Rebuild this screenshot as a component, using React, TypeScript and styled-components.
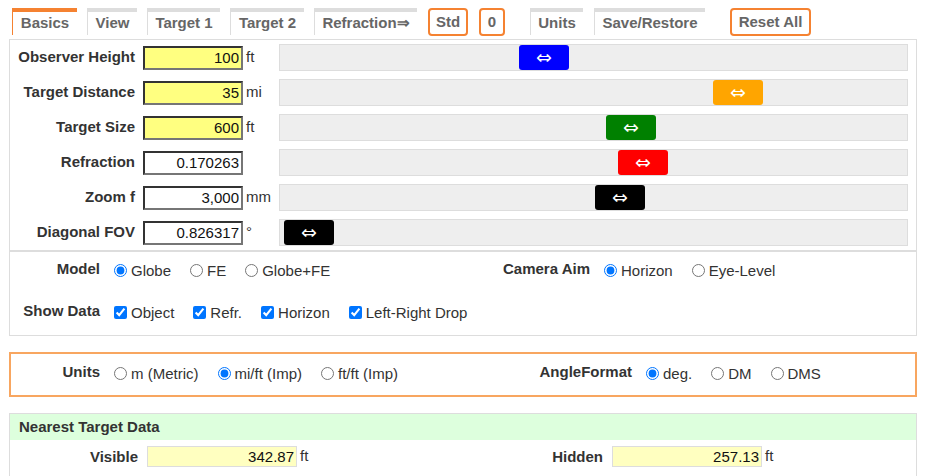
import React from 'react';
import styled, { createGlobalStyle } from 'styled-components';

const GlobalStyle = createGlobalStyle`
  body {
    margin: 0;
    background: #fff;
    font-family: 'Liberation Sans', Arial, sans-serif;
    font-size: 15px;
    color: #333;
  }
`;

interface SliderSpec {
  label: string;
  value: string;
  unit: string;
  editable: boolean;
  color: string;
  pos: number;
}

const sliders: SliderSpec[] = [
  { label: 'Observer Height', value: '100', unit: 'ft', editable: true, color: '#0000ff', pos: 239 },
  { label: 'Target Distance', value: '35', unit: 'mi', editable: true, color: '#ffa500', pos: 433 },
  { label: 'Target Size', value: '600', unit: 'ft', editable: true, color: '#008000', pos: 326 },
  { label: 'Refraction', value: '0.170263', unit: '', editable: false, color: '#ff0000', pos: 338 },
  { label: 'Zoom f', value: '3,000', unit: 'mm', editable: false, color: '#000000', pos: 315 },
  { label: 'Diagonal FOV', value: '0.826317', unit: '°', editable: false, color: '#000000', pos: 4 },
];

export default function App() {
  return (
    <Page>
      <GlobalStyle />
      <TabBar>
        <Tab $active $w={65}>Basics</Tab>
        <Tab $w={50}>View</Tab>
        <Tab $w={73}>Target 1</Tab>
        <Tab $w={74}>Target 2</Tab>
        <Tab $w={103}>Refraction⇒</Tab>
        <Button $w={40} $gap={11}>Std</Button>
        <Button $w={26} $gap={11}>0</Button>
        <Tab $w={53} $gap={25}>Units</Tab>
        <Tab $w={111} $gap={11}>Save/Restore</Tab>
        <Button $w={81} $gap={25}>Reset All</Button>
      </TabBar>

      <Panel>
        <Sliders>
          {sliders.map((s) => (
            <SliderRow key={s.label}>
              <RowLabel>{s.label}</RowLabel>
              <NumBox $editable={s.editable} readOnly value={s.value} />
              <Unit>{s.unit}</Unit>
              <Track>
                <Thumb $color={s.color} style={{ left: s.pos }}>
                  ⇔
                </Thumb>
              </Track>
            </SliderRow>
          ))}
        </Sliders>
        <Options>
          <OptRow>
            <OptGroup>
              <OptLabel $w={90}>Model</OptLabel>
              <Choice>
                <input type="radio" name="model" defaultChecked />
                Globe
              </Choice>
              <Choice>
                <input type="radio" name="model" />
                FE
              </Choice>
              <Choice>
                <input type="radio" name="model" />
                Globe+FE
              </Choice>
            </OptGroup>
            <OptGroup>
              <OptLabel $w={126}>Camera Aim</OptLabel>
              <Choice>
                <input type="radio" name="aim" defaultChecked />
                Horizon
              </Choice>
              <Choice>
                <input type="radio" name="aim" />
                Eye-Level
              </Choice>
            </OptGroup>
          </OptRow>
          <OptRow>
            <OptGroup>
              <OptLabel $w={90}>Show Data</OptLabel>
              <Choice>
                <input type="checkbox" defaultChecked />
                Object
              </Choice>
              <Choice>
                <input type="checkbox" defaultChecked />
                Refr.
              </Choice>
              <Choice>
                <input type="checkbox" defaultChecked />
                Horizon
              </Choice>
              <Choice>
                <input type="checkbox" defaultChecked />
                Left-Right Drop
              </Choice>
            </OptGroup>
          </OptRow>
        </Options>
      </Panel>

      <UnitsPanel>
        <OptRow>
          <OptGroup>
            <OptLabel $w={89}>Units</OptLabel>
            <Choice>
              <input type="radio" name="units" />
              m (Metric)
            </Choice>
            <Choice>
              <input type="radio" name="units" defaultChecked />
              mi/ft (Imp)
            </Choice>
            <Choice>
              <input type="radio" name="units" />
              ft/ft (Imp)
            </Choice>
          </OptGroup>
          <OptGroup>
            <OptLabel $w={167}>AngleFormat</OptLabel>
            <Choice>
              <input type="radio" name="angle" defaultChecked />
              deg.
            </Choice>
            <Choice>
              <input type="radio" name="angle" />
              DM
            </Choice>
            <Choice>
              <input type="radio" name="angle" />
              DMS
            </Choice>
          </OptGroup>
        </OptRow>
      </UnitsPanel>

      <DataPanel>
        <DataHeader>Nearest Target Data</DataHeader>
        <DataRow>
          <DataGroup>
            <DataLabel $w={128}>Visible</DataLabel>
            <DataBox readOnly value="342.87" />
            <Unit>ft</Unit>
          </DataGroup>
          <DataGroup>
            <DataLabel $w={139}>Hidden</DataLabel>
            <DataBox readOnly value="257.13" />
            <Unit>ft</Unit>
          </DataGroup>
        </DataRow>
      </DataPanel>
    </Page>
  );
}

const Page = styled.div`
  width: 908px;
  padding: 8px 0 0 9px;
`;

const TabBar = styled.div`
  display: flex;
  align-items: flex-start;
  padding-left: 3px;
  height: 31px;
`;

const Tab = styled.div<{ $active?: boolean; $gap?: number; $w: number }>`
  box-sizing: border-box;
  width: ${(p) => p.$w}px;
  height: 27px;
  margin-left: ${(p) => p.$gap ?? 10}px;
  border-top: 4px solid ${(p) => (p.$active ? '#f58231' : '#dddddd')};
  border-left: 1px solid ${(p) => (p.$active ? '#f58231' : '#dddddd')};
  font-weight: bold;
  color: #666;
  text-align: center;
  line-height: 22px;
  white-space: nowrap;

  &:first-child {
    margin-left: 0;
  }
`;

const Button = styled.div<{ $gap?: number; $w: number }>`
  box-sizing: border-box;
  width: ${(p) => p.$w}px;
  height: 28px;
  margin-left: ${(p) => p.$gap ?? 10}px;
  border: 2px solid #f58231;
  border-radius: 4px;
  font-weight: bold;
  color: #666;
  text-align: center;
  line-height: 24px;
  white-space: nowrap;
`;

const Panel = styled.div`
  border: 1px solid #dddddd;
`;

const Sliders = styled.div`
  display: flex;
  flex-direction: column;
  gap: 8px;
  padding: 4px 8px 4px 0;
  border-bottom: 2px solid #dddddd;
`;

const SliderRow = styled.div`
  display: grid;
  grid-template-columns: 133px 100px 36px 1fr;
  align-items: center;
  height: 27px;
`;

const RowLabel = styled.div`
  text-align: right;
  font-weight: bold;
  color: #333;
  padding-right: 8px;
  margin-top: -2px;
`;

const NumBox = styled.input<{ $editable: boolean }>`
  box-sizing: border-box;
  width: 100px;
  height: 24px;
  margin: 0;
  padding: 0 2px;
  border: 2px solid;
  border-color: #333 #767676 #767676 #333;
  background: ${(p) => (p.$editable ? '#ffff80' : '#ffffff')};
  font: 15px 'Liberation Sans', Arial, sans-serif;
  color: #111;
  text-align: right;
  outline: none;
`;

const Unit = styled.span`
  margin-left: 3px;
  color: #333;
  align-self: center;
  margin-top: -3px;
`;

const Track = styled.div`
  position: relative;
  box-sizing: border-box;
  height: 27px;
  background: #eeeeee;
  border: 1px solid #dddddd;
`;

const Thumb = styled.div<{ $color: string }>`
  position: absolute;
  top: 0;
  width: 50px;
  height: 25px;
  border-radius: 3px;
  background: ${(p) => p.$color};
  color: #fff;
  font: 19px 'DejaVu Sans', sans-serif;
  line-height: 25px;
  display: flex;
  align-items: center;
  justify-content: center;
`;

const Options = styled.div`
  display: flex;
  flex-direction: column;
  gap: 22px;
  padding: 8px 0 13px;
`;

const OptRow = styled.div`
  display: grid;
  grid-template-columns: 454px 1fr;
  height: 20px;
`;

const OptGroup = styled.div`
  display: flex;
  align-items: center;
`;

const OptLabel = styled.div<{ $w: number }>`
  width: ${(p) => p.$w}px;
  flex: none;
  text-align: right;
  font-weight: bold;
  color: #333;
  margin-right: 9px;
  margin-top: -4px;
`;

const Choice = styled.label`
  display: flex;
  align-items: center;
  margin-right: 14px;
  color: #333;
  white-space: nowrap;

  input {
    width: 13px;
    height: 13px;
    margin: 1px 4px 0 5px;
  }
`;

const UnitsPanel = styled.div`
  box-sizing: border-box;
  height: 45px;
  margin-top: 16px;
  border: 2px solid #f8a660;
  padding-top: 9px;
`;

const DataPanel = styled.div`
  margin-top: 16px;
  border: 1px solid #dddddd;
  height: 80px;
`;

const DataHeader = styled.div`
  height: 26px;
  background: #ddffdd;
  padding-left: 9px;
  font-weight: bold;
  color: #333;
  line-height: 25px;
`;

const DataRow = styled.div`
  display: grid;
  grid-template-columns: 454px 1fr;
  padding-top: 6px;
`;

const DataGroup = styled.div`
  display: flex;
  align-items: center;
`;

const DataLabel = styled.div<{ $w: number }>`
  width: ${(p) => p.$w}px;
  flex: none;
  text-align: right;
  font-weight: bold;
  color: #333;
  margin-right: 9px;
`;

const DataBox = styled.input`
  box-sizing: border-box;
  width: 150px;
  height: 21px;
  margin: 0;
  padding: 0 2px;
  border: 1px solid #dddddd;
  background: #ffffc0;
  font: 15px 'Liberation Sans', Arial, sans-serif;
  color: #111;
  text-align: right;
  outline: none;
`;
